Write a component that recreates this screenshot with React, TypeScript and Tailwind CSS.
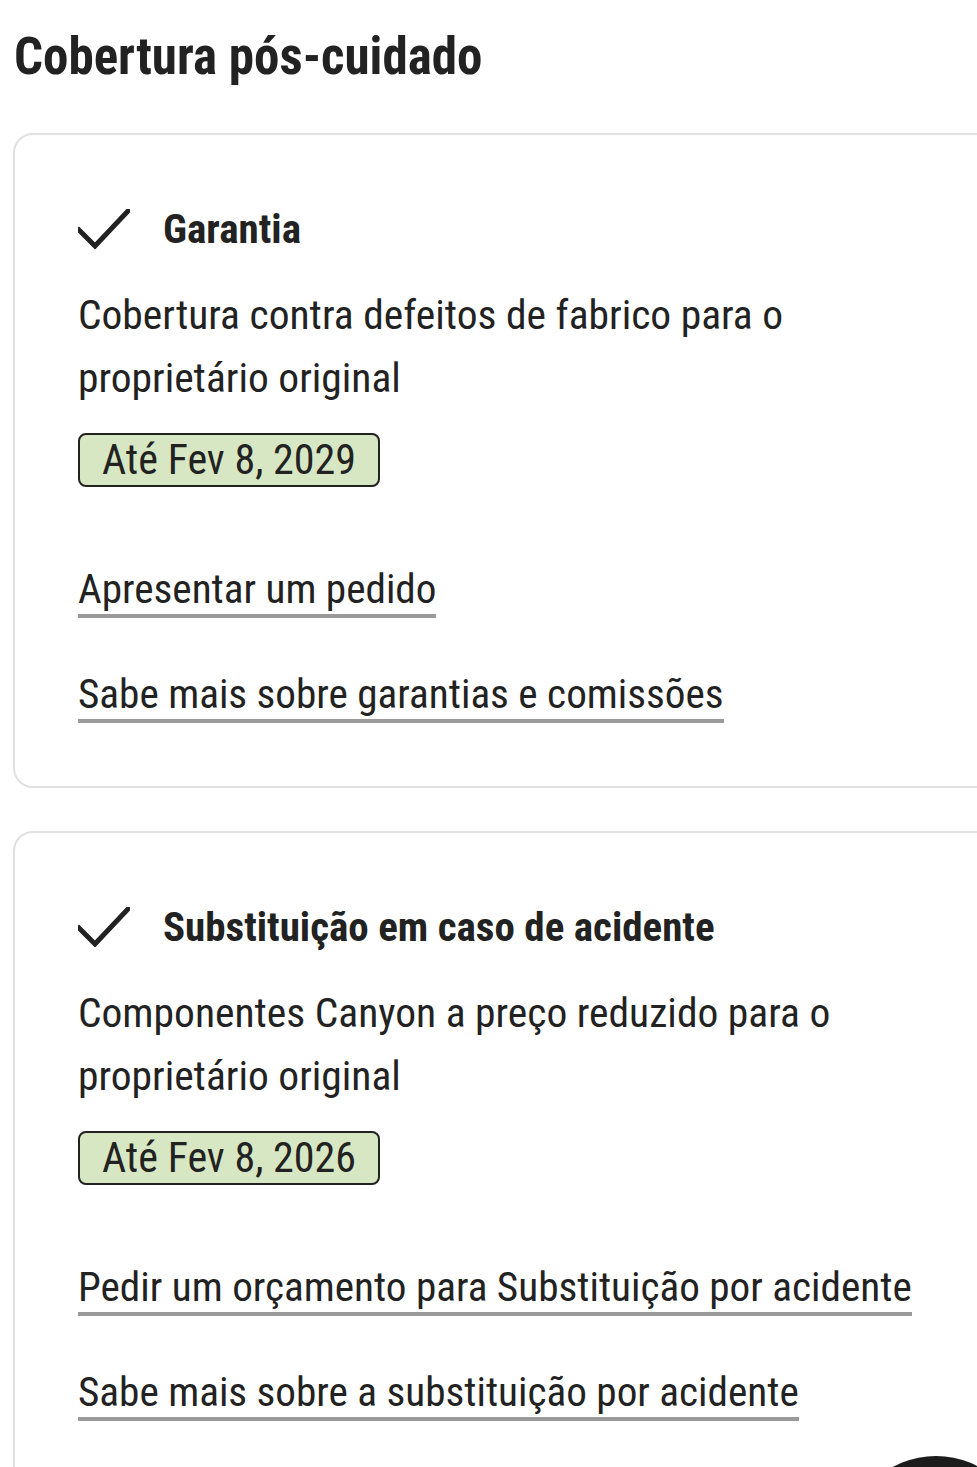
import React from 'react';

const CheckIcon = () => (
  <svg width="52" height="40" viewBox="0 0 52 40" fill="none" className="shrink-0">
    <path d="M1 21 L17 37 L50 2" stroke="#222" strokeWidth="5" strokeLinecap="square" />
  </svg>
);

type Coverage = {
  title: string;
  body: string;
  until: string;
  links: string[];
};

const items: Coverage[] = [
  {
    title: 'Garantia',
    body: 'Cobertura contra defeitos de fabrico para o proprietário original',
    until: 'Até Fev 8, 2029',
    links: ['Apresentar um pedido', 'Sabe mais sobre garantias e comissões'],
  },
  {
    title: 'Substituição em caso de acidente',
    body: 'Componentes Canyon a preço reduzido para o proprietário original',
    until: 'Até Fev 8, 2026',
    links: ['Pedir um orçamento para Substituição por acidente', 'Sabe mais sobre a substituição por acidente'],
  },
];

const CoverageCard = ({ item }: { item: Coverage }) => (
  <div className="mr-[-60px] rounded-[20px] border-2 border-[#e0e0e0] pl-[63px] pt-[74px] pb-[63px]">
    <div className="flex h-[40px] items-center gap-[33px]">
      <CheckIcon />
      <h3 className="text-[41px] font-bold leading-[40px] text-[#222]">{item.title}</h3>
    </div>
    <p className="mt-[34px] max-w-[870px] text-[41.5px] leading-[63px] text-[#222]">{item.body}</p>
    <div className="mt-[24px]">
      <span className="inline-block rounded-[8px] border-2 border-[#222] bg-[#d8e7c3] px-[22px] text-[42px] leading-[50px] text-[#222]">
        {item.until}
      </span>
    </div>
    <div className="mt-[77px] flex flex-col items-start gap-[51px]">
      {item.links.map((l) => (
        <a key={l} href="#" className="inline-block border-b-4 border-[#9a9a9a] text-[41.2px] leading-[50px] text-[#222]">
          {l}
        </a>
      ))}
    </div>
  </div>
);

export default function App() {
  return (
    <div
      className="relative min-h-[1467px] overflow-hidden bg-white pl-[13px] pt-[25px]"
      style={{ fontFamily: '"Roboto Condensed", "Liberation Sans Narrow", "DejaVu Sans Condensed", Roboto, sans-serif', fontStretch: 'condensed' }}
    >
      <h1 className="pl-[1px] text-[51px] font-bold leading-[64px] text-[#222]">Cobertura pós-cuidado</h1>
      <div className="mt-[44px] flex flex-col gap-[43px]">
        {items.map((it) => (
          <CoverageCard key={it.title} item={it} />
        ))}
      </div>
      <div className="absolute left-[846px] top-[1456px] h-[180px] w-[180px] rounded-full bg-[#1c1c1c]" />
    </div>
  );
}
